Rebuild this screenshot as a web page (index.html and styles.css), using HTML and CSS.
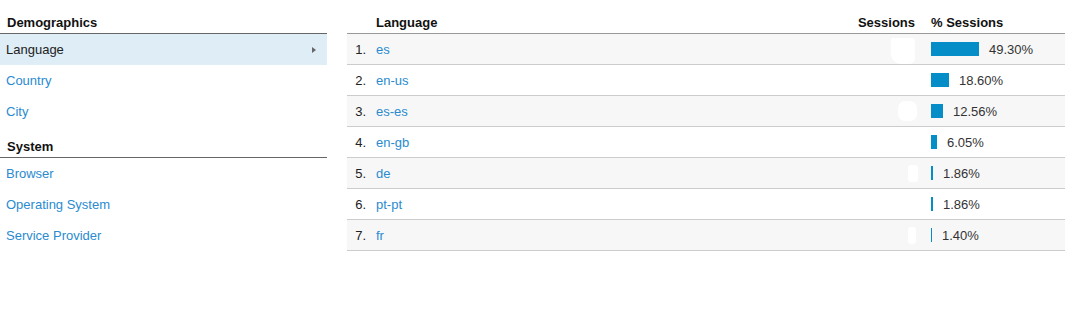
FILE: index.html
```html
<!DOCTYPE html>
<html lang="en">
<head>
  <meta charset="UTF-8" />
  <title>Language report</title>
  <link rel="stylesheet" href="styles.css">
</head>
<body>

  <div class="page">

    <div class="side-nav">
      <div class="nav-title">Demographics</div>
      <a href="#" class="nav-item active">Language <span class="nav-arrow"></span></a>
      <a href="#" class="nav-item">Country</a>
      <a href="#" class="nav-item">City</a>

      <div class="nav-title">System</div>
      <a href="#" class="nav-item">Browser</a>
      <a href="#" class="nav-item">Operating System</a>
      <a href="#" class="nav-item">Service Provider</a>
    </div>

    <div class="report">
      <div class="report-row report-head">
        <div class="col-num"></div>
        <div class="col-lang">Language</div>
        <div class="col-sessions">Sessions</div>
        <div class="col-pct">% Sessions</div>
      </div>

      <div class="report-row">
        <div class="col-num">1.</div>
        <div class="col-lang"><a href="#">es</a></div>
        <div class="col-sessions"><span class="blot blot-1"></span></div>
        <div class="col-pct"><span class="bar" style="width: 48px"></span>49.30%</div>
      </div>
      <div class="report-row">
        <div class="col-num">2.</div>
        <div class="col-lang"><a href="#">en-us</a></div>
        <div class="col-sessions"></div>
        <div class="col-pct"><span class="bar" style="width: 18px"></span>18.60%</div>
      </div>
      <div class="report-row">
        <div class="col-num">3.</div>
        <div class="col-lang"><a href="#">es-es</a></div>
        <div class="col-sessions"><span class="blot blot-3"></span></div>
        <div class="col-pct"><span class="bar" style="width: 12px"></span>12.56%</div>
      </div>
      <div class="report-row">
        <div class="col-num">4.</div>
        <div class="col-lang"><a href="#">en-gb</a></div>
        <div class="col-sessions"></div>
        <div class="col-pct"><span class="bar" style="width: 6px"></span>6.05%</div>
      </div>
      <div class="report-row">
        <div class="col-num">5.</div>
        <div class="col-lang"><a href="#">de</a></div>
        <div class="col-sessions"><span class="blot blot-5"></span></div>
        <div class="col-pct"><span class="bar" style="width: 2px"></span>1.86%</div>
      </div>
      <div class="report-row">
        <div class="col-num">6.</div>
        <div class="col-lang"><a href="#">pt-pt</a></div>
        <div class="col-sessions"></div>
        <div class="col-pct"><span class="bar" style="width: 2px"></span>1.86%</div>
      </div>
      <div class="report-row">
        <div class="col-num">7.</div>
        <div class="col-lang"><a href="#">fr</a></div>
        <div class="col-sessions"><span class="blot blot-7"></span></div>
        <div class="col-pct"><span class="bar" style="width: 1px"></span>1.40%</div>
      </div>
    </div>

  </div>

</body>
</html>
```

FILE: styles.css
```css
body {
  margin: 0;
  padding: 0;
  font-family: "Liberation Sans", Arial, sans-serif;
  font-size: 13px;
  color: #333;
  background-color: #fff;
  overflow: hidden;
}

a {
  color: #2a8bd0;
  text-decoration: none;
}

.page {
  display: flex;
  gap: 20px;
  padding-top: 3px;
}

/* left menu */
.side-nav {
  width: 327px;
  flex-shrink: 0;
  display: flex;
  flex-direction: column;
}

.nav-title {
  padding: 12px 0 2px 7px;
  line-height: 16px;
  font-weight: bold;
  color: #111;
  border-bottom: 1px solid #666;
}

.nav-item {
  display: flex;
  align-items: center;
  justify-content: space-between;
  height: 31px;
  padding: 0 11px 0 6px;
}

.nav-item.active {
  background-color: #deedf6;
  color: #222;
}

.nav-arrow {
  width: 0;
  height: 0;
  border-top: 3.5px solid transparent;
  border-bottom: 3.5px solid transparent;
  border-left: 4px solid #666;
}

/* report table */
.report {
  flex: 1;
  display: flex;
  flex-direction: column;
}

.report-row {
  display: flex;
  align-items: center;
  height: 30px;
  border-bottom: 1px solid #ccc;
}

.report-row:nth-child(even) {
  background-color: #f7f7f7;
}

.report-head {
  height: auto;
  align-items: flex-end;
  padding: 12px 0 2px;
  line-height: 16px;
  font-weight: bold;
  color: #111;
  border-bottom: 1px solid #999;
}

.col-num {
  width: 19px;
  padding-right: 10px;
  text-align: right;
  color: #222;
}

.col-lang {
  flex: 1;
}

.col-sessions {
  width: 80px;
  padding-right: 16px;
  display: flex;
  justify-content: flex-end;
  align-items: center;
}

.report-head .col-sessions {
  display: block;
  text-align: right;
}

.col-pct {
  width: 134px;
  display: flex;
  align-items: center;
}

.report-head .col-pct {
  display: block;
}

.bar {
  display: inline-block;
  height: 14px;
  margin-right: 10px;
  background-color: #058dc7;
}

/* white marks over the hidden session counts */
.blot {
  display: inline-block;
  background-color: #fff;
  border-radius: 3px;
}

.blot-1 {
  width: 24px;
  height: 26px;
  margin-top: 3px;
  border-radius: 2px 4px 6px 10px;
}

.blot-3 {
  width: 19px;
  height: 20px;
  margin-right: -2px;
  border-radius: 7px;
}

.blot-5 {
  width: 10px;
  height: 17px;
  margin-right: -3px;
}

.blot-7 {
  width: 8px;
  height: 17px;
  margin-right: -1px;
}
```
